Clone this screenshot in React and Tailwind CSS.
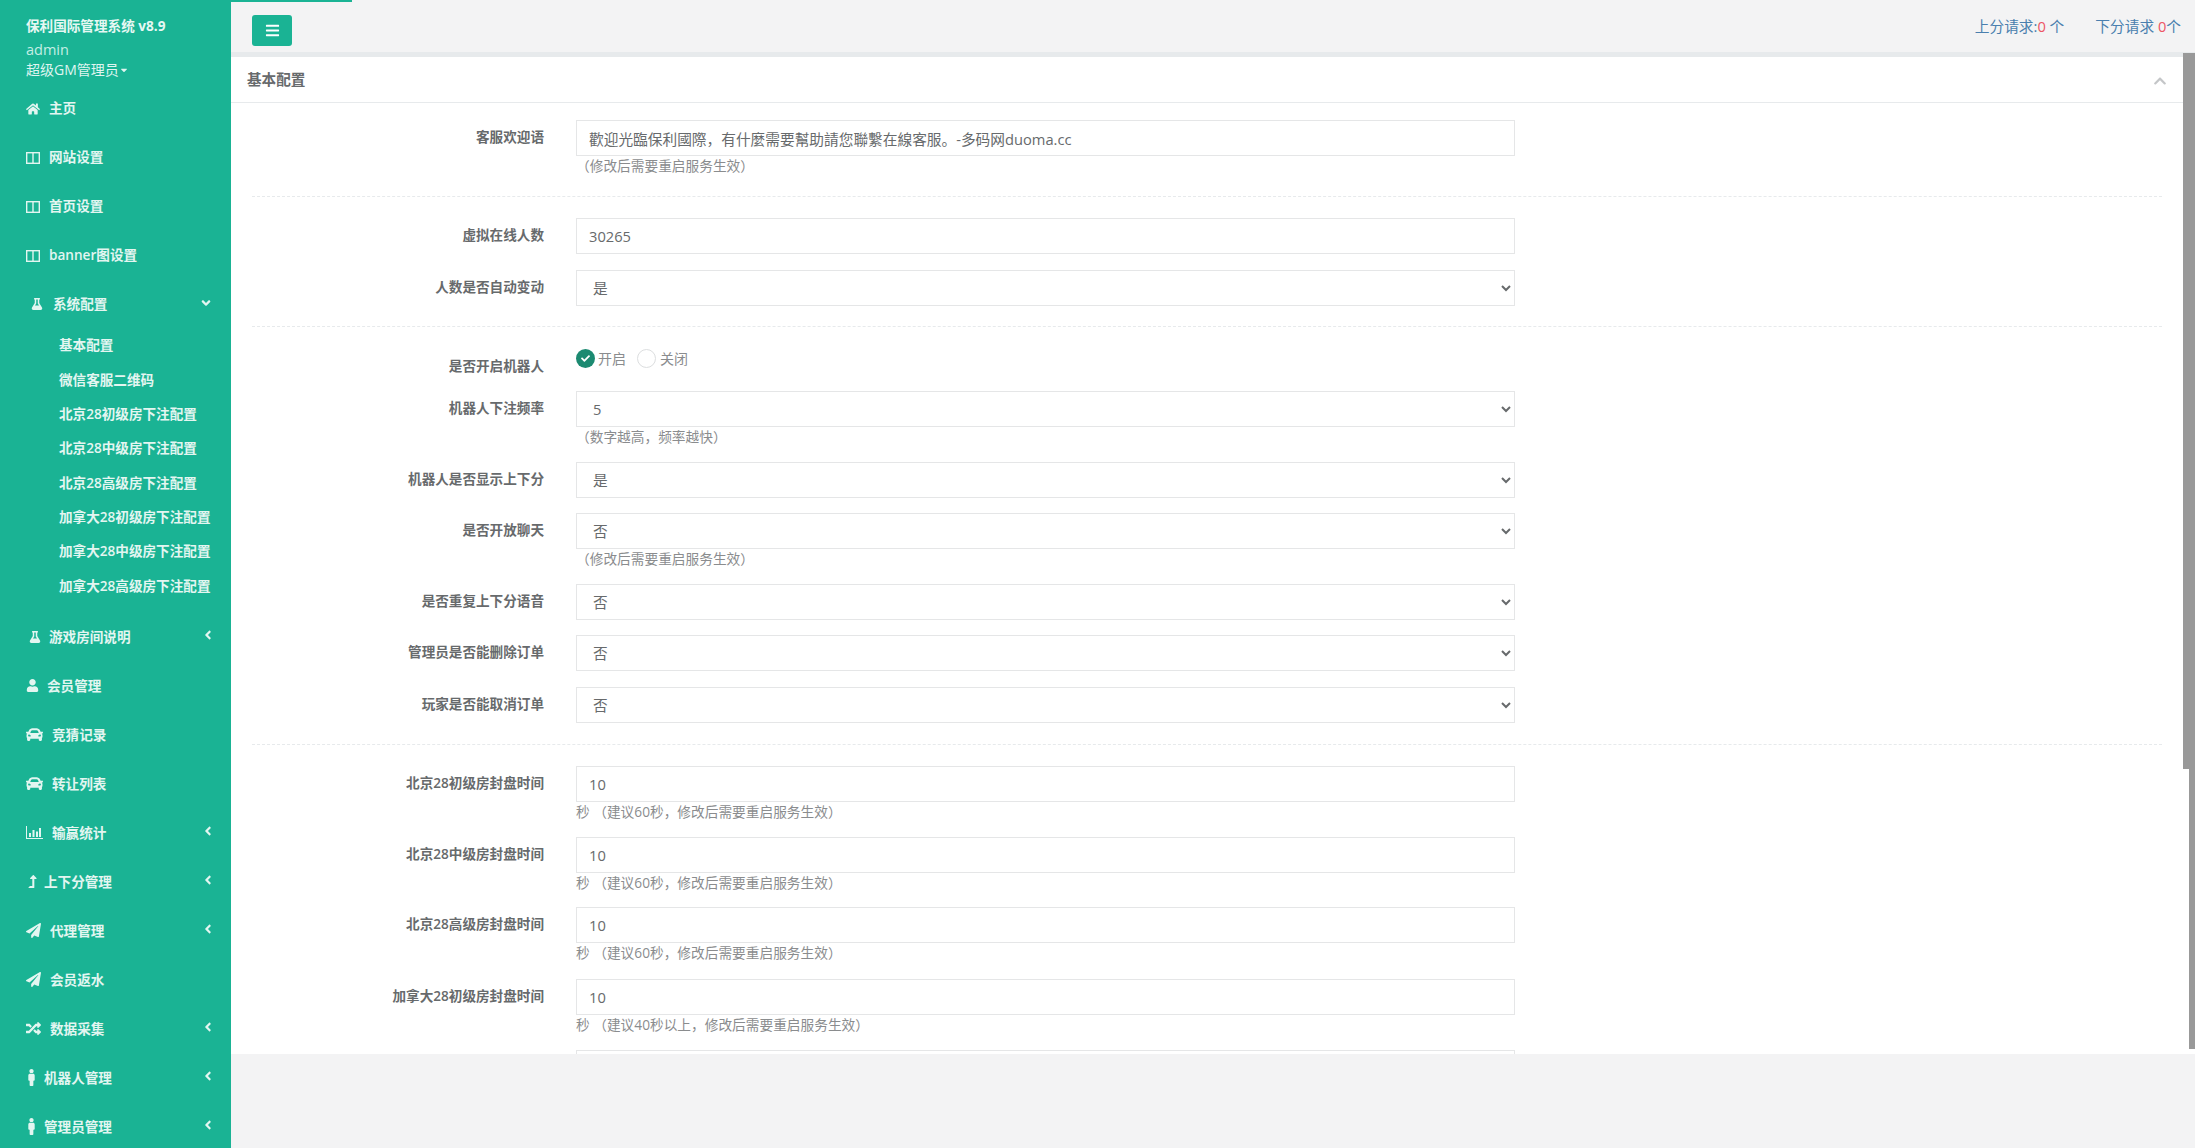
import React from 'react';
import { FaHome, FaFlask, FaUser, FaCar, FaLevelUpAlt, FaPaperPlane, FaRandom, FaMale, FaBars, FaAngleLeft, FaAngleDown, FaChevronUp, FaCheck, FaCaretDown } from 'react-icons/fa';

const ColumnsIcon = () => (
    <svg width="14" height="12" viewBox="0 0 14 12" fill="none" stroke="currentColor" strokeWidth="1.4"><rect x="0.7" y="0.7" width="12.6" height="10.6" /><path d="M7 0.7V11.3" /></svg>
);

const ChartIcon = () => (
    <svg width="17" height="13" viewBox="0 0 17 13" fill="currentColor"><path d="M0 0h1v12h16v1H0z" /><path d="M3 7h2v4H3zM6.5 4h2v7h-2zM10 5.5h2V11h-2zM13 2h2v9h-2z" /></svg>
);

const subItems = ['基本配置', '微信客服二维码', '北京28初级房下注配置', '北京28中级房下注配置', '北京28高级房下注配置', '加拿大28初级房下注配置', '加拿大28中级房下注配置', '加拿大28高级房下注配置'];

const NavItem = ({ icon, label, gap, arrow }) => (
    <div className="flex items-center h-[49px] pl-[26px] pr-[16px] text-[13.6px] font-semibold text-[#e3f6f1]">
        <span className={`flex items-center shrink-0 ${gap}`}>{icon}</span>
        <span>{label}</span>
        {arrow && <FaAngleLeft className="ml-auto mb-[3px] text-[14px]" />}
    </div>
);

const Sidebar = () => (
    <aside className="w-[231px] shrink-0 h-full overflow-hidden bg-[#1ab394]">
        <div className="h-[84px] pl-[26px] pt-[16px]">
            <div className="text-[13.6px] font-bold leading-[20px] text-[#e6f8f3]">保利国际管理系统 v8.9</div>
            <div className="text-[14.5px] leading-[20px] mt-[4px] text-[#c4eee4]">admin</div>
            <div className="flex items-center text-[14px] leading-[20px] text-[#dff5f0]">超级GM管理员<FaCaretDown className="text-[10px]" /></div>
        </div>
        <NavItem icon={<FaHome className="text-[14px]" />} label="主页" gap="w-[23px]" />
        <NavItem icon={<ColumnsIcon />} label="网站设置" gap="w-[23px]" />
        <NavItem icon={<ColumnsIcon />} label="首页设置" gap="w-[23px]" />
        <NavItem icon={<ColumnsIcon />} label="banner图设置" gap="w-[23px]" />
        <div className="flex items-center h-[48.5px] pl-[31px] pr-[16px] text-[13.6px] font-semibold text-[#e3f6f1]">
            <span className="flex items-center shrink-0 w-[22px]"><FaFlask className="text-[12px]" /></span>
            <span>系统配置</span>
            <FaAngleDown className="ml-auto mb-[3px] mr-[2px] text-[14px]" />
        </div>
        <div className="pb-[9.5px]">
            {subItems.map((s) => (
                <div key={s} className="flex items-center h-[34.3px] pl-[59px] text-[13.6px] font-semibold text-[#e3f6f1]">{s}</div>
            ))}
        </div>
        <NavItem icon={<FaFlask className="text-[12px] ml-[3px]" />} label="游戏房间说明" gap="w-[23px]" arrow />
        <NavItem icon={<FaUser className="text-[13px]" />} label="会员管理" gap="w-[21px]" />
        <NavItem icon={<FaCar className="text-[17px]" />} label="竞猜记录" gap="w-[26px]" />
        <NavItem icon={<FaCar className="text-[17px]" />} label="转让列表" gap="w-[26px]" />
        <NavItem icon={<ChartIcon />} label="输赢统计" gap="w-[26px]" arrow />
        <NavItem icon={<FaLevelUpAlt className="text-[13px]" />} label="上下分管理" gap="w-[18px]" arrow />
        <NavItem icon={<FaPaperPlane className="text-[15px]" />} label="代理管理" gap="w-[24px]" arrow />
        <NavItem icon={<FaPaperPlane className="text-[15px]" />} label="会员返水" gap="w-[24px]" />
        <NavItem icon={<FaRandom className="text-[15px]" />} label="数据采集" gap="w-[24px]" arrow />
        <NavItem icon={<FaMale className="text-[17px] -ml-[3px]" />} label="机器人管理" gap="w-[18px]" arrow />
        <NavItem icon={<FaMale className="text-[17px] -ml-[3px]" />} label="管理员管理" gap="w-[18px]" arrow />
    </aside>
);

const Row = ({ label, top, children, help }) => (
    <div className={`flex ${top}`}>
        <label className="w-[292px] shrink-0 pt-[7px] text-right text-[13.6px] leading-[20px] font-semibold text-[#676a6c]">{label}</label>
        <div className="ml-[32px] w-[939px]">
            {children}
            {help && <div className="mt-[2px] h-[16px] text-[13.7px] leading-[16px] text-[#8a8c8e]">{help}</div>}
        </div>
    </div>
);

const TextInput = ({ value }) => (
    <input readOnly value={value} className="block w-full h-[36px] px-3 border border-[#e5e6e7] bg-white text-[14.7px] text-[#676a6c] outline-none" />
);

const Select = ({ value }) => (
    <select value={value} onChange={() => {}} className="block w-full h-[36px] pl-[12px] border border-[#e5e6e7] bg-white text-[14.7px] text-[#676a6c] outline-none">
        <option>{value}</option>
    </select>
);

const Divider = ({ top }) => <div className={`border-t border-dashed border-[#e7eaec] w-[1910px] ${top}`} />;

const RESTART = '（修改后需要重启服务生效）';

const App = () => (
    <div className="flex h-screen overflow-hidden bg-[#f3f3f4] font-['Open_Sans','Noto_Sans_CJK_SC',sans-serif]">
        <Sidebar />
        <main className="relative flex-1 min-w-0 flex flex-col h-full">
            <div className="absolute left-0 top-0 h-[2px] w-[121px] bg-[#1ab394]" />
            <header className="flex items-center justify-between h-[57px] shrink-0 border-b-[5px] border-[#e7eaec] pl-[21px] pr-[14px]">
                <button className="flex items-center justify-center w-[40px] h-[31px] mt-[9px] rounded-[3px] bg-[#1ab394] text-white text-[15px]"><FaBars /></button>
                <div className="flex gap-[31px] text-[14.7px] text-[#4a7fae]">
                    <span>上分请求:<span className="text-[#ed5565]">0</span> 个</span>
                    <span>下分请求 <span className="text-[#ed5565]">0</span>个</span>
                </div>
            </header>
            <section className="h-[997px] shrink-0 overflow-hidden bg-white">
                <div className="flex items-center justify-between h-[46px] border-b border-[#e7eaec] pl-[16px] pr-[28px]">
                    <h5 className="text-[14.6px] font-semibold text-[#676a6c]">基本配置</h5>
                    <FaChevronUp className="text-[14px] mt-[3px] text-[#c4c6c8]" />
                </div>
                <div className="pl-[21px]">
                    <Row label="客服欢迎语" top="mt-[17px]" help={RESTART}><TextInput value="歡迎光臨保利國際，有什麼需要幫助請您聯繫在線客服。-多码网duoma.cc" /></Row>
                    <Divider top="mt-[22px]" />
                    <Row label="虚拟在线人数" top="mt-[21px]"><TextInput value="30265" /></Row>
                    <Row label="人数是否自动变动" top="mt-[16px]"><Select value="是" /></Row>
                    <Divider top="mt-[20px]" />
                    <Row label="是否开启机器人" top="mt-[22px]">
                        <div className="flex items-center h-[20px] pb-[2px] text-[14px] text-[#8a8c8e]">
                            <span className="flex items-center justify-center w-[19px] h-[19px] rounded-full bg-[#1c8a71] text-white text-[9px]"><FaCheck /></span>
                            <span className="ml-[3px]">开启</span>
                            <span className="ml-[11px] w-[19px] h-[19px] rounded-full border border-[#dcdedf] bg-white" />
                            <span className="ml-[4px]">关闭</span>
                        </div>
                    </Row>
                    <Row label="机器人下注频率" top="mt-[15px]" help="（数字越高，频率越快）"><Select value="5" /></Row>
                    <Row label="机器人是否显示上下分" top="mt-[17px]"><Select value="是" /></Row>
                    <Row label="是否开放聊天" top="mt-[15px]" help={RESTART}><Select value="否" /></Row>
                    <Row label="是否重复上下分语音" top="mt-[17px]"><Select value="否" /></Row>
                    <Row label="管理员是否能删除订单" top="mt-[15px]"><Select value="否" /></Row>
                    <Row label="玩家是否能取消订单" top="mt-[16px]"><Select value="否" /></Row>
                    <Divider top="mt-[21px]" />
                    <Row label="北京28初级房封盘时间" top="mt-[21px]" help="秒 （建议60秒，修改后需要重启服务生效）"><TextInput value="10" /></Row>
                    <Row label="北京28中级房封盘时间" top="mt-[17px]" help="秒 （建议60秒，修改后需要重启服务生效）"><TextInput value="10" /></Row>
                    <Row label="北京28高级房封盘时间" top="mt-[16px]" help="秒 （建议60秒，修改后需要重启服务生效）"><TextInput value="10" /></Row>
                    <Row label="加拿大28初级房封盘时间" top="mt-[18px]" help="秒 （建议40秒以上，修改后需要重启服务生效）"><TextInput value="10" /></Row>
                    <Row label="" top="mt-[17px]"><TextInput value="" /></Row>
                </div>
            </section>
            <div className="absolute right-0 top-[53px] w-[12px] h-[716px] bg-[#999]" />
            <div className="absolute right-0 top-[769px] w-[12px] h-[285px] bg-white" />
            <div className="absolute right-0 top-[769px] w-[6px] h-[280px] bg-[#999]" />
        </main>
    </div>
);

export default App;
